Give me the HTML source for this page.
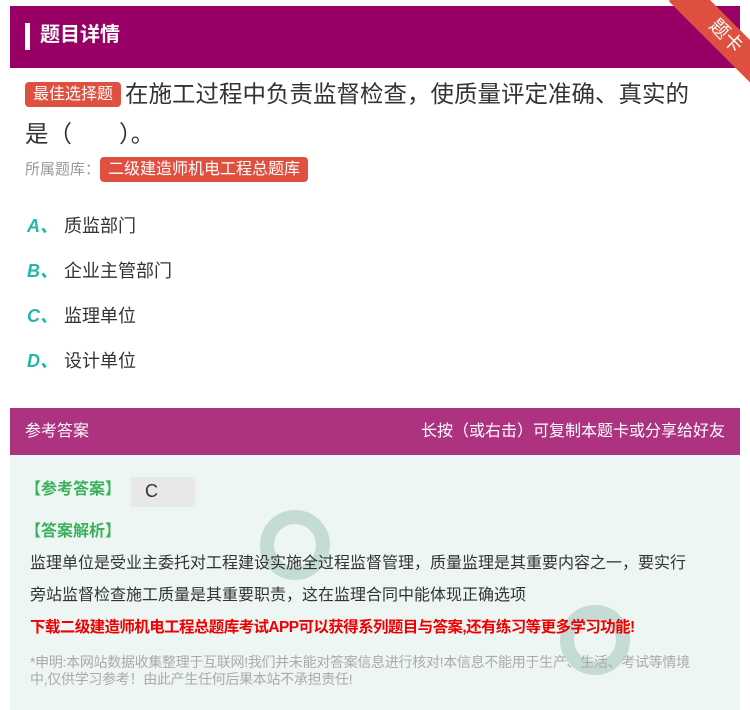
<!DOCTYPE html>
<html><head><meta charset="utf-8"><style>
*{margin:0;padding:0;box-sizing:border-box}
body{width:750px;height:710px;background:#fff;font-family:"Liberation Sans","Noto Sans CJK SC",sans-serif;position:relative;overflow:hidden;color:#333}
.abs{position:absolute}
.hdr{left:10px;top:6px;width:730px;height:62px;background:#990066}
.bar{left:25px;top:23px;width:5px;height:27px;background:#fff}
.ht{left:40px;top:20px;color:#fff;font-size:20px;font-weight:bold;line-height:30px}
.tag{background:#e05040;color:#fff;border-radius:4px;font-size:16px;padding:0 8px;line-height:25px;display:inline-block}
.q{left:25px;top:74px;width:720px;font-size:23.5px;line-height:40px;color:#333;white-space:nowrap}
.opt{left:27px;font-size:18px;line-height:24px}
.opt b{color:#22b8a8;font-style:italic;display:inline-block;width:37px}
.ah{left:10px;top:408px;width:730px;height:47px;background:#ad3380;color:#fff;font-size:16px;line-height:47px;padding:0 15px}
.ab{left:10px;top:455px;width:730px;height:255px;background:#eef6f4}
</style></head><body>
<div class="abs hdr"></div>
<div class="abs bar"></div>
<div class="abs ht">题目详情</div>
<div class="abs" style="width:130px;height:30px;background:#e05040;transform:rotate(45deg);transform-origin:0 0;color:#fff;font-size:19px;text-align:center;line-height:30px;left:690px;top:-20px">题卡</div>
<div class="abs q"><span class="tag" style="position:relative;top:-3px;margin-right:4px">最佳选择题</span>在施工过程中负责监督检查，使质量评定准确、真实的<br>是（　　）。</div>
<div class="abs" style="left:25px;top:157px;font-size:15px;color:#999;line-height:25px">所属题库：<span class="tag">二级建造师机电工程总题库</span></div>
<div class="abs opt" style="top:214px"><b>A、</b>质监部门</div>
<div class="abs opt" style="top:259px"><b>B、</b>企业主管部门</div>
<div class="abs opt" style="top:304px"><b>C、</b>监理单位</div>
<div class="abs opt" style="top:349px"><b>D、</b>设计单位</div>
<div class="abs ah"><span>参考答案</span><span style="float:right">长按（或右击）可复制本题卡或分享给好友</span></div>
<div class="abs ab"></div>
<div class="abs" style="left:260px;top:510px;width:70px;height:70px;border-radius:50%;border:14px solid #c5dcd6"></div>
<div class="abs" style="left:560px;top:605px;width:70px;height:70px;border-radius:50%;border:14px solid #c5dcd6"></div>
<div class="abs" style="left:25px;top:478px;color:#3cb05a;font-size:16px;font-weight:bold;line-height:24px">【参考答案】</div>
<div class="abs" style="left:131px;top:477px;width:64px;height:30px;background:#e8e8e8;font-size:18px;line-height:28px;padding-left:14px">C</div>
<div class="abs" style="left:25px;top:520px;color:#3cb05a;font-size:16px;font-weight:bold;line-height:24px">【答案解析】</div>
<div class="abs" style="left:30px;top:548px;width:668px;font-size:16px;line-height:32px;color:#333">监理单位是受业主委托对工程建设实施全过程监督管理，质量监理是其重要内容之一，要实行旁站监督检查施工质量是其重要职责，这在监理合同中能体现正确选项</div>
<div class="abs" style="left:30px;top:616px;font-size:15.5px;font-weight:bold;color:#e00;line-height:24px;letter-spacing:-0.6px">下载二级建造师机电工程总题库考试APP可以获得系列题目与答案,还有练习等更多学习功能!</div>
<div class="abs" style="left:30px;top:654px;width:700px;font-size:14px;color:#aaa;line-height:17px;letter-spacing:-0.3px;white-space:nowrap">*申明:本网站数据收集整理于互联网!我们并未能对答案信息进行核对!本信息不能用于生产、生活、考试等情境<br>中,仅供学习参考！由此产生任何后果本站不承担责任!</div>
</body></html>
